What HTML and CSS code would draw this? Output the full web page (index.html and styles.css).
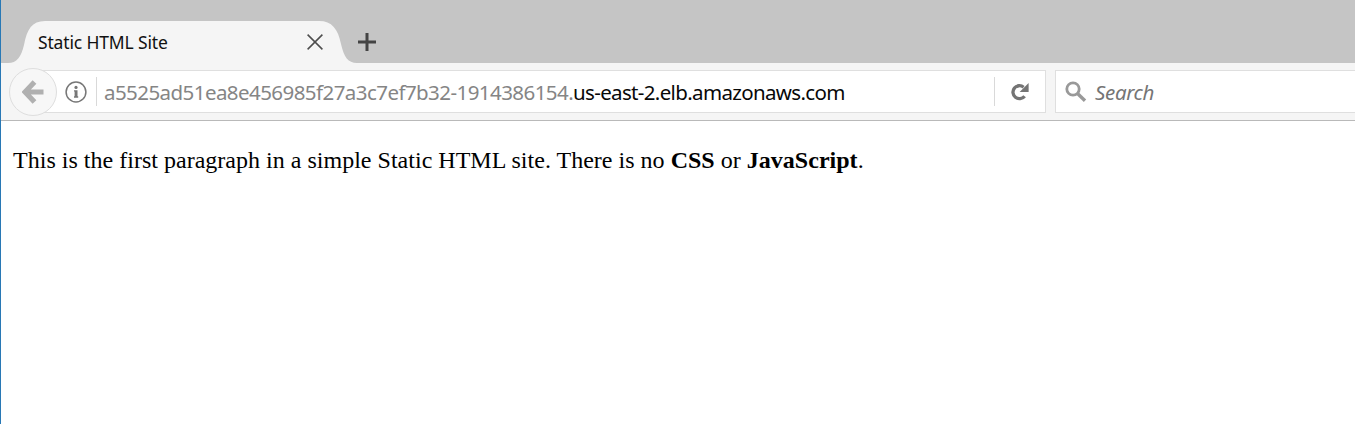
FILE: index.html
```html
<!DOCTYPE html>
<html lang="en">
<head>
<meta charset="utf-8">
<title>Static HTML Site</title>
<link rel="stylesheet" href="styles.css">
</head>
<body>
<div class="window">
  <header class="tabs">
    <div class="tab">
      <svg class="tab-shape" width="356" height="43" viewBox="0 0 356 43"><path d="M0 43V42H7C16 42 20 36 23 24C26 8 31 0 44 0H318C331 0 337 8 340 23C343 36 347 42 356 42V43Z" fill="#f5f5f5"/></svg>
      <span class="tab-title">Static HTML Site</span>
      <svg class="close" width="16" height="16" viewBox="0 0 16 16"><path d="M.6.6 15.4 15.4M15.4.6.6 15.4" stroke="#4d4d4d" stroke-width="1.5"/></svg>
    </div>
    <svg class="plus" width="18" height="18" viewBox="0 0 18 18"><path d="M9 0V18M0 9H18" stroke="#444" stroke-width="3"/></svg>
  </header>
  <nav class="toolbar">
    <div class="back"><svg width="22" height="24" viewBox="0 0 22 24"><path d="M12.5 2 3 12 12.5 22M3 12H21.5" fill="none" stroke="#b0b0b0" stroke-width="5.2"/></svg></div>
    <div class="address">
      <svg class="info" width="22" height="22" viewBox="0 0 22 22"><circle cx="11" cy="11" r="9.9" fill="none" stroke="#777" stroke-width="1.5"/><circle cx="11" cy="6.4" r="1.6" fill="#777"/><path d="M9 9.2H12.5V15.2H13.2V16.7H9V15.2H9.6V10.6H9Z" fill="#777"/></svg>
      <div class="url"><span class="host">a5525ad51ea8e456985f27a3c7ef7b32-1914386154.</span><span class="domain">us-east-2.elb.amazonaws.com</span></div>
      <div class="reload"><svg width="18" height="20" viewBox="0 0 18 20"><path d="M13.6 14.2A6.5 6.5 0 1 1 12.6 5.2" fill="none" stroke="#747474" stroke-width="3.3"/><path d="M17.6 1V10H8.6Z" fill="#747474"/></svg></div>
    </div>
    <div class="search">
      <svg width="22" height="22" viewBox="0 0 22 22"><circle cx="8" cy="8" r="6.2" fill="none" stroke="#999" stroke-width="2.8"/><path d="M12.5 12.5 20 19.7" stroke="#999" stroke-width="3.4"/></svg>
      <span class="search-label">Search</span>
    </div>
  </nav>
  <main class="page"><p>This is the first paragraph in a simple Static HTML site. There is no <b>CSS</b> or <b>JavaScript</b>.</p></main>
</div>
</body>
</html>
```
FILE: styles.css
```css
* { box-sizing: border-box; }
body { margin: 0; overflow: hidden; background: #fff; }
svg { display: block; flex: none; }
.window { height: 424px; border-left: 1px solid #2878b5; font-family: "Noto Sans", sans-serif; overflow: hidden; }
.tabs { display: flex; height: 63px; padding-top: 21px; background: #c5c5c5; }
.tab { position: relative; display: flex; width: 357px; height: 42px; padding-left: 37px; }
.tab-shape { position: absolute; left: 0; top: 0; }
.tab-title { position: relative; width: 269px; line-height: 42px; font-size: 17.5px; letter-spacing: -.15px; color: #111; white-space: nowrap; }
.close { position: relative; margin-top: 13px; }
.plus { margin-top: 12px; }
.toolbar { display: flex; align-items: center; height: 58px; padding-left: 8px; background: #f5f5f5; border-bottom: 1px solid #b9b9b9; }
.back { position: relative; z-index: 1; display: flex; flex: none; align-items: center; justify-content: center; width: 48px; height: 48px; border: 1px solid #dedede; border-radius: 50%; background: #f7f7f7; }
.address { display: flex; flex: none; align-items: center; width: 1016px; height: 43px; margin-left: -27px; padding-left: 34px; border: 1px solid #dfdfdf; background: #fff; }
.url { display: flex; flex: none; width: 898px; height: 29px; margin-left: 9px; padding-left: 7px; border-left: 1px solid #d9d9d9; font-size: 20.5px; line-height: 31px; white-space: nowrap; }
.host { width: 469px; color: #858585; letter-spacing: -.56px; }
.domain { color: #080808; letter-spacing: -.65px; }
.reload { display: flex; align-items: center; height: 29px; padding-left: 16px; border-left: 1px solid #d9d9d9; }
.search { display: flex; align-items: center; flex: none; width: 330px; height: 43px; margin-left: 9px; padding-left: 9px; border: 1px solid #dfdfdf; background: #fff; }
.search-label { margin-left: 8px; font-size: 20.5px; font-style: italic; letter-spacing: -.35px; color: #757575; }
.page { padding: 24px 12px; font: 24px/30px "Liberation Serif", serif; color: #000; }
.page p { margin: 0; letter-spacing: .016px; white-space: nowrap; }
```
